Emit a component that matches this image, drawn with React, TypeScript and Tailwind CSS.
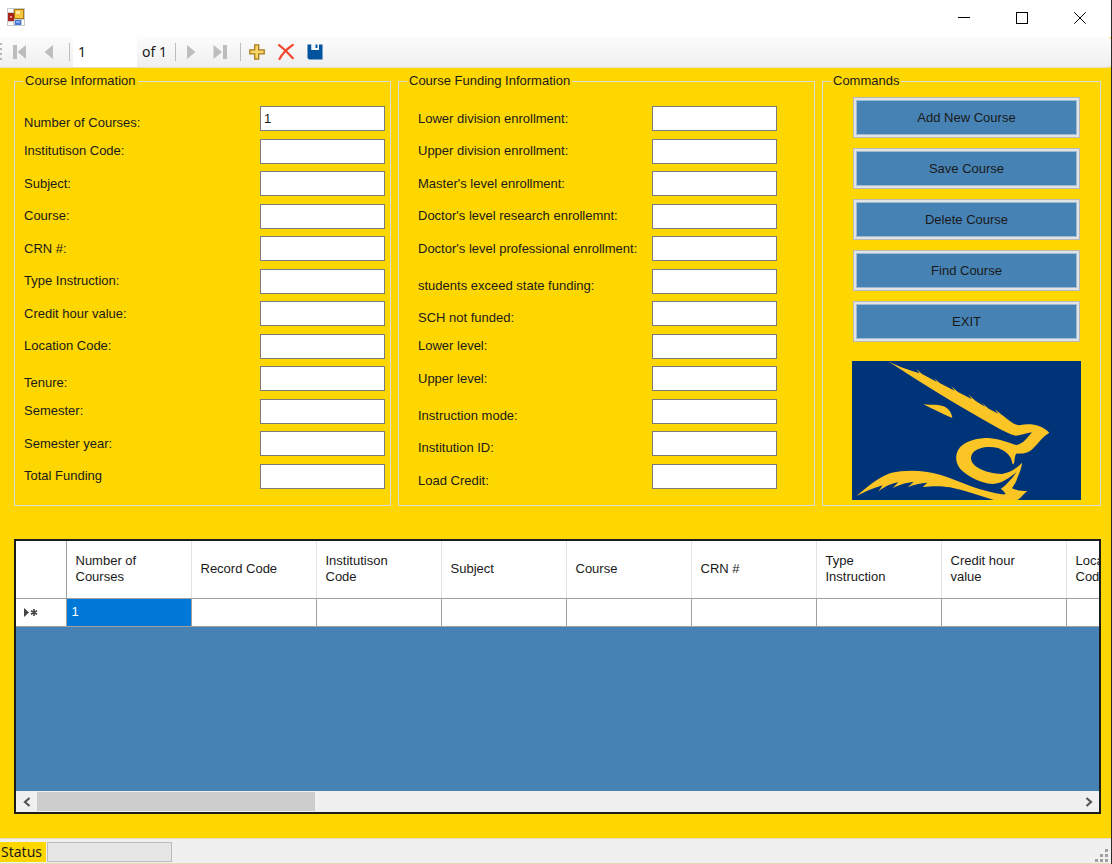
import React from "react";

type Field = { label: string; value?: string; low?: boolean };

const courseFields: Field[] = [
  { label: "Number of Courses:", value: "1", low: true },
  { label: "Institutison Code:" },
  { label: "Subject:" },
  { label: "Course:" },
  { label: "CRN #:" },
  { label: "Type Instruction:" },
  { label: "Credit hour value:" },
  { label: "Location Code:" },
  { label: "Tenure:", low: true },
  { label: "Semester:" },
  { label: "Semester year:" },
  { label: "Total Funding" },
];

const fundingFields: Field[] = [
  { label: "Lower division enrollment:" },
  { label: "Upper division enrollment:" },
  { label: "Master's level enrollment:" },
  { label: "Doctor's level research enrollemnt:" },
  { label: "Doctor's level professional enrollment:" },
  { label: "students exceed state funding:", low: true },
  { label: "SCH not funded:", low: true },
  { label: "Lower level:" },
  { label: "Upper level:" },
  { label: "Instruction mode:", low: true },
  { label: "Institution ID:", low: true },
  { label: "Load Credit:", low: true },
];

const commands = ["Add New Course", "Save Course", "Delete Course", "Find Course", "EXIT"];

const columns = [
  "Number of\nCourses",
  "Record Code",
  "Institutison\nCode",
  "Subject",
  "Course",
  "CRN #",
  "Type\nInstruction",
  "Credit hour\nvalue",
  "Location\nCode",
];

function TitleBar() {
  return (
    <header className="flex h-[37px] items-center bg-white">
      <svg className="mb-[4px] ml-[7px] size-[18px]" viewBox="0 0 18 18" aria-hidden="true">
        <rect width="18" height="18" fill="#c9c9c9" />
        <rect x="1" y="1" width="5" height="3" fill="#fff" />
        <rect x="1" y="14" width="5" height="3" fill="#fff" />
        <rect x="15" y="12" width="2" height="5" fill="#fff" />
        <rect x="1" y="5" width="6" height="8" fill="#a8231c" />
        <rect x="3" y="8" width="2" height="2" fill="#f08a80" />
        <rect x="7" y="1" width="10" height="10" fill="#a87a10" />
        <rect x="8" y="2" width="8" height="8" fill="#f6c63c" />
        <rect x="9" y="3" width="4" height="3" fill="#fde79a" />
        <rect x="8" y="12" width="6" height="5" fill="#3f78d8" />
        <rect x="9" y="13" width="4" height="2" fill="#86b0f0" />
      </svg>
      <div className="ml-auto flex h-[36px] self-start pr-[2px]">
        <button aria-label="Minimize" className="grid w-[58px] place-items-center">
          <svg width="12" height="12" viewBox="0 0 12 12" stroke="#000">
            <path d="M0 5.5H12" />
          </svg>
        </button>
        <button aria-label="Maximize" className="grid w-[58px] place-items-center">
          <svg width="12" height="12" viewBox="0 0 12 12" stroke="#000" fill="none">
            <rect x="0.5" y="0.5" width="11" height="11" />
          </svg>
        </button>
        <button aria-label="Close" className="grid w-[58px] place-items-center">
          <svg width="12" height="12" viewBox="0 0 12 12" stroke="#000">
            <path d="M0.3 0.3L11.7 11.7M11.7 0.3L0.3 11.7" />
          </svg>
        </button>
      </div>
    </header>
  );
}

function Separator() {
  return <span className="h-[18px] w-px bg-[#bdbdbd]" />;
}

function ToolButton({ label, children }: { label: string; children: React.ReactNode }) {
  return (
    <button aria-label={label} className="grid h-full w-[29px] place-items-center">
      <svg width="16" height="16" viewBox="0 0 16 16">
        {children}
      </svg>
    </button>
  );
}

function Toolbar() {
  return (
    <div className="bg-[#ffd700]">
      <div className="flex h-[31px] items-center rounded-r-[3px] border-b border-[#e6e0c0] bg-linear-to-b from-[#fcfcfc] to-[#efefef] font-['Noto_Sans',sans-serif] text-[14px] text-[#1a1a1a]">
        <svg width="5" height="18" viewBox="0 0 5 18" fill="#b5b5b5" aria-hidden="true">
          <path d="M0 0h2v2H0zM0 5h2v2H0zM0 10h2v2H0zM0 15h2v2H0z" />
        </svg>
        <ToolButton label="Move first">
          <path d="M1 1h4v14H1z" fill="#bdbdbd" />
          <path d="M14 1v14L5.500 8z" fill="#bdbdbd" />
        </ToolButton>
        <ToolButton label="Move previous">
          <path d="M12 1v14L3.500 8z" fill="#bdbdbd" />
        </ToolButton>
        <span className="w-[6px]" />
        <Separator />
        <input
          aria-label="Current position"
          defaultValue="1"
          className="ml-[3px] h-[30px] w-[64px] bg-white px-[5px] pb-[2px] outline-none"
        />
        <span className="w-[38px] pl-[5px]">of 1</span>
        <Separator />
        <ToolButton label="Move next">
          <path d="M4 1v14l8.500-7z" fill="#bdbdbd" />
        </ToolButton>
        <ToolButton label="Move last">
          <path d="M1.500 1v14l8.500-7z" fill="#bdbdbd" />
          <path d="M11 1h4v14h-4z" fill="#bdbdbd" />
        </ToolButton>
        <span className="w-[6px]" />
        <Separator />
        <span className="w-[1px]" />
        <ToolButton label="Add new">
          <path
            d="M5.700 0.800h4v5h5.500v4H9.700v5.400h-4V9.800H0.800v-4h4.900z"
            fill="#fbd768"
            stroke="#a57a1c"
            strokeWidth="1.300"
          />
        </ToolButton>
        <ToolButton label="Delete">
          <path
            d="M1 1.200C5 4 10 9 14.800 14.200M14.800 0.800C9 5 4 10 1.500 15"
            fill="none"
            stroke="#f2462e"
            strokeWidth="2.200"
            strokeLinecap="round"
          />
        </ToolButton>
        <ToolButton label="Save data">
          <path d="M0.500 0.500H4.500V7H12V0.500H15.500V15.500H2L0.500 14z" fill="#00539c" />
          <path d="M4.500 0.500H12V6H4.500z" fill="#f7fafd" />
          <path d="M8.500 0.500h2V4h-2z" fill="#00539c" />
          <path d="M4 6h8v1.500H4z" fill="#00539c" />
        </ToolButton>
      </div>
    </div>
  );
}

function Group({ title, children }: { title: string; children: React.ReactNode }) {
  return (
    <fieldset className="min-w-0 border border-solid border-[#dcdcdc]">
      <legend className="ml-[8px] px-[2px] leading-[20px]">{title}</legend>
      {children}
    </fieldset>
  );
}

function FieldList({ fields, prefix }: { fields: Field[]; prefix: string }) {
  return (
    <div className="flex h-[383px] flex-col justify-between">
      {fields.map((f, i) => (
        <div key={f.label} className="flex h-[25px] justify-between">
          <label
            htmlFor={prefix + i}
            className={f.low ? "self-end whitespace-nowrap" : "self-center whitespace-nowrap"}
          >
            {f.label}
          </label>
          <input
            id={prefix + i}
            defaultValue={f.value}
            className="w-[125px] shrink-0 border border-[#7a7a7a] bg-white px-[3px] outline-none"
          />
        </div>
      ))}
    </div>
  );
}

function BirdLogo() {
  return (
    <svg className="block w-full" viewBox="36 213 687 417" role="img" aria-label="Roadrunner logo">
      <rect x="36" y="213" width="687" height="417" fill="#003478" />
      <g fill="#fcc526">
        <path d="M143 213C175 230 205 239 239 250L229 236L246 252L291 276L282 265L300 280L344 302L334 289L354 306L396 328L385 313L406 332L436 351L425 338L446 356L475 371L464 357L486 375C505 389 520 404 538 406C572 399 602 404 628 428C604 442 592 466 571 482C557 492 542 490 528 491C523 500 525 512 521 523C516 523 516 511 512 503C504 489 490 480 474 474C446 467 413 472 399 488C386 505 396 522 412 532C434 546 462 552 486 552C512 548 532 534 546 518C544 540 534 556 530 570C526 580 520 588 516 595C532 602 546 603 562 603C551 612 544 622 533 630H461C419 617 370 600 330 592C300 587 277 588 248 591L262 578C242 579 220 584 203 592L221 576C199 577 176 586 158 594L175 577C154 580 130 591 114 606L128 586C100 593 74 607 49 618C78 594 112 563 152 549C200 538 252 541 300 554C350 570 395 592 440 603C462 609 480 614 497 613C494 606 489 600 482 597C500 584 518 563 530 545C510 562 486 580 458 582C420 580 380 557 361 537C345 518 344 491 360 472C382 450 414 444 446 444C476 446 502 457 528 465C550 463 562 442 576 427C560 428 544 437 527 437C507 433 488 421 470 412C360 350 260 289 143 213Z" />
        <path d="M250 343C276 346 298 342 316 351C330 360 335 371 337 384C310 374 280 357 250 343Z" />
      </g>
    </svg>
  );
}

function Commands() {
  return (
    <div className="flex flex-col pt-[6px] pr-[19px] pb-[5px] pl-[29px]">
      <div className="mx-[1px] flex flex-col gap-[10px]">
        {commands.map((c) => (
          <button key={c} className="h-[41px] border border-[#b9b9b9] bg-[#e3e3e3] p-[2px]">
            <span className="grid h-full place-items-center border border-[#9dbbd3] bg-[#4682b4]">{c}</span>
          </button>
        ))}
      </div>
      <div className="mt-[19px]">
        <BirdLogo />
      </div>
    </div>
  );
}

function CourseTable() {
  return (
    <div className="mt-[33px] mb-[24px] flex flex-1 flex-col overflow-hidden border-2 border-[#1c1c1c] bg-[#4682b4]">
      <div className="flex-1 overflow-hidden">
        <table className="w-[1175px] table-fixed border-collapse bg-white text-left leading-[16px]">
          <thead>
            <tr className="h-[57px]">
              <th className="w-[50px] border-r border-b border-[#a0a0a0]" aria-label="Row" />
              {columns.map((c) => (
                <th
                  key={c}
                  className="w-[125px] border-r border-b border-r-[#e2e2e2] border-b-[#a0a0a0] pl-[9px] align-middle font-normal whitespace-pre-line"
                >
                  {c}
                </th>
              ))}
            </tr>
          </thead>
          <tbody>
            <tr className="h-[28px]">
              <td className="border-r border-b border-[#a0a0a0] pl-[8px]">
                <svg width="14" height="9" viewBox="0 0 14 9" aria-label="New row">
                  <path d="M0 0L5 4.500L0 9z" fill="#444" />
                  <path d="M10 1v7M7 2.800l6 3.400M13 2.800L7 6.200" stroke="#444" strokeWidth="1.600" />
                </svg>
              </td>
              {columns.map((c, i) => (
                <td
                  key={c}
                  className={
                    i === 0
                      ? "border-r border-b border-[#a0a0a0] bg-[#0078d7] pl-[5px] text-white"
                      : "border-r border-b border-[#a0a0a0] pl-[5px]"
                  }
                >
                  {i === 0 ? "1" : ""}
                </td>
              ))}
            </tr>
          </tbody>
        </table>
      </div>
      <div className="flex h-[21px] items-stretch bg-[#f0f0f0]">
        <button aria-label="Scroll left" className="grid w-[21px] place-items-center">
          <svg width="8" height="10" viewBox="0 0 8 10" fill="none" stroke="#555" strokeWidth="2.200">
            <path d="M6.500 1L2 5l4.500 4" />
          </svg>
        </button>
        <div className="flex flex-1 py-[1px]">
          <div className="w-4/15 bg-[#cdcdcd]" />
        </div>
        <button aria-label="Scroll right" className="grid w-[21px] place-items-center">
          <svg width="8" height="10" viewBox="0 0 8 10" fill="none" stroke="#555" strokeWidth="2.200">
            <path d="M1.500 1L6 5L1.500 9" />
          </svg>
        </button>
      </div>
    </div>
  );
}

function StatusBar() {
  return (
    <footer className="flex h-[26px] border-y border-[#e4dcb8] bg-[#f0f0f0] font-['Noto_Sans',sans-serif] text-[14px]">
      <span className="mt-[3px] mb-[1px] flex w-[46px] items-center bg-[#ffd700] pl-[1px]">Status</span>
      <div
        role="progressbar"
        aria-label="Status"
        className="mt-[3px] mb-[1px] ml-[1px] w-[125px] border border-[#bcbcbc] bg-[#e6e6e6]"
      />
      <svg className="mt-auto mr-[3px] mb-[1px] ml-auto" width="13" height="13" viewBox="0 0 13 13" fill="#a0a0a0" aria-hidden="true">
        <path d="M10 0h3v3h-3zM5 5h3v3H5zM10 5h3v3h-3zM0 10h3v3H0zM5 10h3v3H5zM10 10h3v3h-3z" />
      </svg>
    </footer>
  );
}

export default function App() {
  return (
    <div className="flex min-h-screen flex-col border-r border-[#2a2a2a] bg-[#ffd700] font-['Liberation_Sans',Arial,sans-serif] text-[13px] leading-[16px] text-[#1a1a1a]">
      <TitleBar />
      <Toolbar />
      <main className="flex flex-1 flex-col pt-[3px] pr-[10px] pl-[14px]">
        <div className="grid grid-cols-[377fr_417fr_279fr] gap-[7px]">
          <Group title="Course Information">
            <div className="pt-[15px] pr-[5px] pb-[16px] pl-[9px]">
              <FieldList fields={courseFields} prefix="course-" />
            </div>
          </Group>
          <Group title="Course Funding Information">
            <div className="pt-[15px] pr-[37px] pb-[16px] pl-[19px]">
              <FieldList fields={fundingFields} prefix="funding-" />
            </div>
          </Group>
          <Group title="Commands">
            <Commands />
          </Group>
        </div>
        <CourseTable />
      </main>
      <StatusBar />
    </div>
  );
}
